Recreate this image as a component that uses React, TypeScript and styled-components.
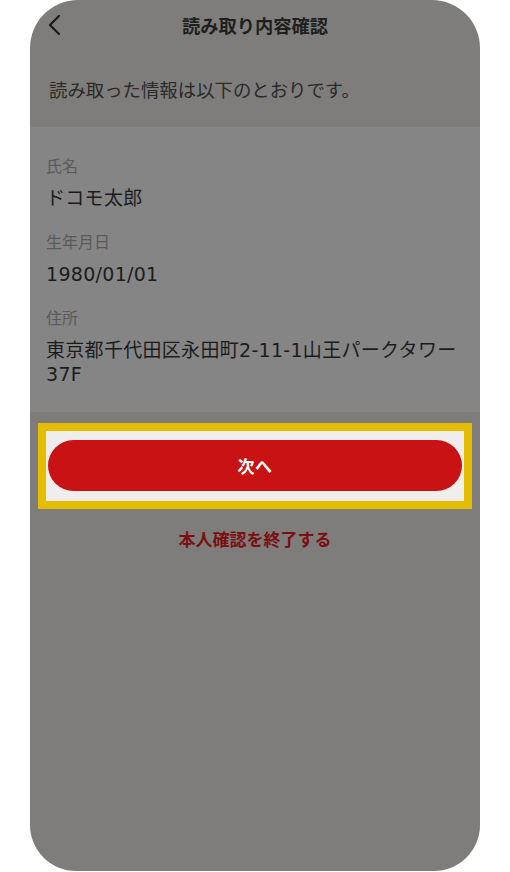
import styled, { createGlobalStyle } from 'styled-components';

const GlobalStyle = createGlobalStyle`
  html, body {
    margin: 0;
    padding: 0;
    background: #ffffff;
  }
  body {
    font-family: 'Noto Sans CJK JP', 'Noto Sans', sans-serif;
  }
  * {
    box-sizing: border-box;
  }
`;

interface InfoItem {
  label: string;
  value: string;
}

const infoList: InfoItem[] = [
  { label: '氏名', value: 'ドコモ太郎' },
  { label: '生年月日', value: '1980/01/01' },
  { label: '住所', value: '東京都千代田区永田町2-11-1山王パークタワー37F' },
];

//styled 컴포넌트
const StyledPhoneFrame = styled.div`
  margin: 0 30px;
  inline-size: 450px;
  block-size: 871px;
  border-radius: 48px 48px 46px 46px;
  background: #7e7d7b;
  overflow: hidden;
  display: flex;
  flex-direction: column;
`;

const StyledHeader = styled.header`
  display: grid;
  grid-template-columns: 1fr auto 1fr;
  align-items: center;
  block-size: 50px;
  padding: 0 17px;

  & .backButton {
    justify-self: start;
    display: flex;
    align-items: center;
    padding: 0;
    border: none;
    background: none;
  }
  & .title {
    margin: 0;
    font-size: 18.3px;
    font-weight: 700;
    line-height: 24px;
    color: #1f1f1e;
  }
`;

const StyledLead = styled.p`
  margin: 0;
  padding: 27px 19px 25px;
  font-size: 18.4px;
  line-height: 25px;
  color: #2a2a29;
`;

const StyledInfoSection = styled.dl`
  margin: 0;
  padding: 27px 16px 26px;
  background: #858585;
  display: flex;
  flex-direction: column;
  gap: 20px;
`;

const StyledInfoItem = styled.div`
  display: flex;
  flex-direction: column;
  gap: 10px;

  & dt {
    font-size: 16px;
    line-height: 22px;
    color: #5a5a5a;
  }
  & dd {
    margin: 0;
    font-family: 'DejaVu Sans', 'Noto Sans CJK JP', sans-serif;
    font-size: 19px;
    line-height: 24px;
    letter-spacing: 0.3px;
    color: #1c1c1c;
    line-break: strict;
  }
`;

const StyledHighlight = styled.div`
  margin: 11px 8px 0;
  border: 8px solid #e5bd00;
  background: #f0eded;
  padding: 9px 2px 10px;
`;

const StyledNextButton = styled.button`
  display: block;
  inline-size: 100%;
  block-size: 51px;
  border: none;
  border-radius: 26px;
  background: #c91213;
  color: #ffffff;
  font-family: inherit;
  font-size: 17px;
  font-weight: 700;
  letter-spacing: 0.5px;
`;

const StyledQuitLink = styled.button`
  align-self: center;
  margin-top: 18px;
  padding: 0;
  border: none;
  background: none;
  font-family: inherit;
  font-size: 17px;
  font-weight: 700;
  line-height: 24px;
  color: #7a1012;
`;

const BackIcon = () => (
  <svg width="14" height="22" viewBox="0 0 14 22" fill="none">
    <path
      d="M12 2 L3 11 L12 20"
      stroke="#1a1a1a"
      strokeWidth="2.2"
      strokeLinecap="round"
      strokeLinejoin="round"
    />
  </svg>
);

const App = () => {
  return (
    <>
      <GlobalStyle />
      <StyledPhoneFrame>
        <StyledHeader>
          <button className="backButton" type="button" aria-label="戻る">
            <BackIcon />
          </button>
          <h1 className="title">読み取り内容確認</h1>
          <span />
        </StyledHeader>
        <StyledLead>読み取った情報は以下のとおりです。</StyledLead>
        <StyledInfoSection>
          {infoList.map((item) => (
            <StyledInfoItem key={item.label}>
              <dt>{item.label}</dt>
              <dd>{item.value}</dd>
            </StyledInfoItem>
          ))}
        </StyledInfoSection>
        <StyledHighlight>
          <StyledNextButton type="button">次へ</StyledNextButton>
        </StyledHighlight>
        <StyledQuitLink type="button">本人確認を終了する</StyledQuitLink>
      </StyledPhoneFrame>
    </>
  );
};

export default App;
